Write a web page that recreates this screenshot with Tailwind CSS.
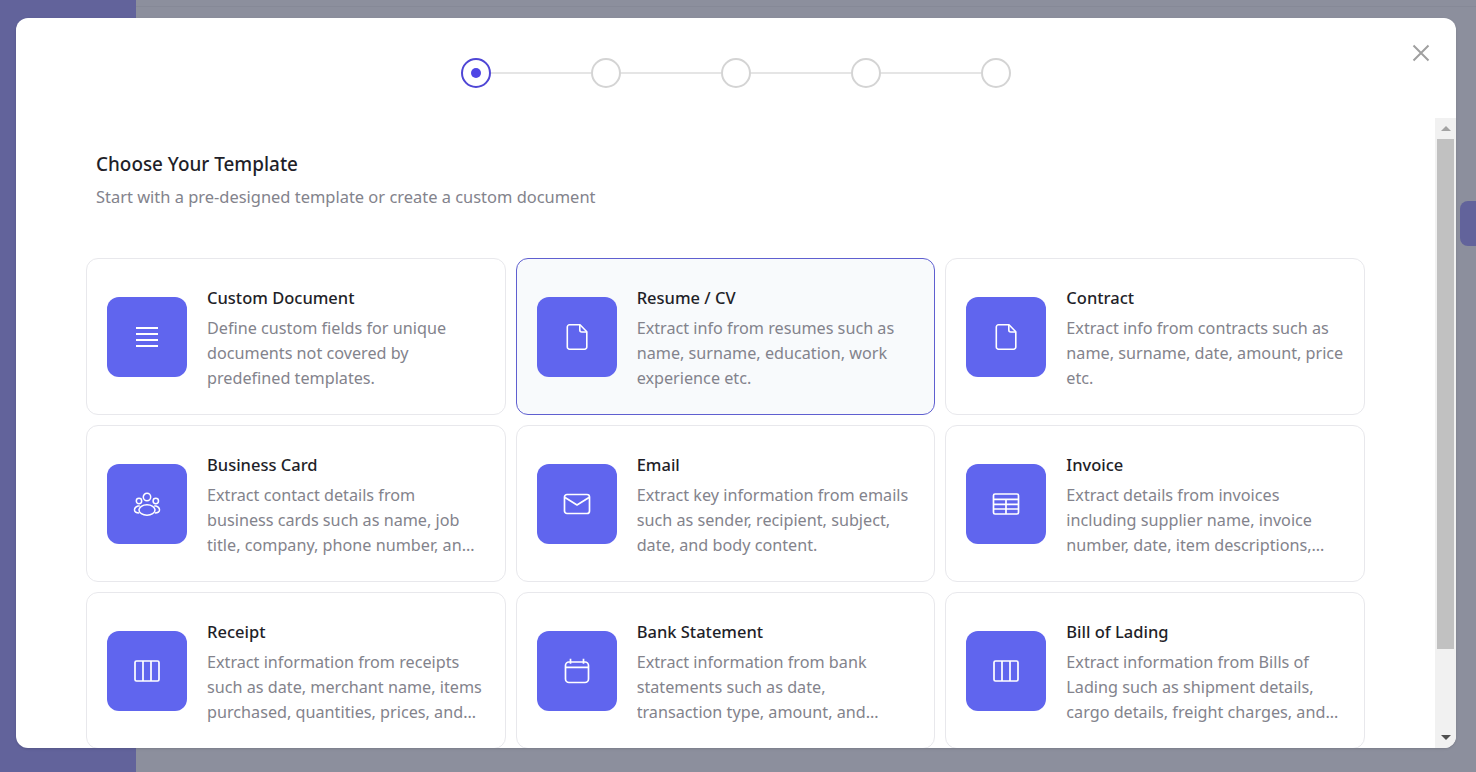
<!DOCTYPE html>
<html lang="en">
  <head>
    <meta charset="UTF-8" />
    <meta name="viewport" content="width=device-width, initial-scale=1.0" />
    <title>Choose Your Template</title>
    <script src="https://cdn.jsdelivr.net/npm/@tailwindcss/browser@4"></script>
  </head>
  <body class="h-[772px] overflow-hidden bg-[#8c8f9d] font-['Noto_Sans',sans-serif]">
    <!-- Page behind the dialog -->
    <div class="flex h-[772px]">
      <div class="w-[136px] bg-[#62639b]"></div>
      <div class="flex-1 flex flex-col">
        <div class="mt-[6px] h-px bg-[#868997]"></div>
        <div class="flex-1 flex justify-end items-start pt-[194px]">
          <div class="w-[16px] h-[45px] rounded-l-lg bg-[#62639b]"></div>
        </div>
      </div>
    </div>

    <!-- Dialog -->
    <div class="absolute left-[16px] top-[18px] w-[1440px] h-[730px] bg-white rounded-xl overflow-hidden flex flex-col shadow-sm">
      <!-- Stepper -->
      <div class="h-[100px] shrink-0 pt-[40px] flex justify-center relative">
        <div class="flex items-center h-[30px]">
          <div class="w-[30px] h-[30px] rounded-full border-2 border-[#4f46d5] flex items-center justify-center">
            <div class="w-[10px] h-[10px] rounded-full bg-[#4f46e5]"></div>
          </div>
          <div class="w-[100px] h-[2px] bg-[#e5e5e5]"></div>
          <div class="w-[30px] h-[30px] rounded-full border-2 border-[#d4d4d4]"></div>
          <div class="w-[100px] h-[2px] bg-[#e5e5e5]"></div>
          <div class="w-[30px] h-[30px] rounded-full border-2 border-[#d4d4d4]"></div>
          <div class="w-[100px] h-[2px] bg-[#e5e5e5]"></div>
          <div class="w-[30px] h-[30px] rounded-full border-2 border-[#d4d4d4]"></div>
          <div class="w-[100px] h-[2px] bg-[#e5e5e5]"></div>
          <div class="w-[30px] h-[30px] rounded-full border-2 border-[#d4d4d4]"></div>
        </div>
        <svg class="absolute left-[1395px] top-[25px]" width="20" height="20" viewBox="0 0 20 20" fill="none" stroke="#a0a0a0" stroke-width="2"><path d="M2.500 2.500l15 15M17.500 2.500l-15 15" /></svg>
      </div>

      <div class="flex-1 flex min-h-0">
        <!-- Scrolling content -->
        <div class="flex-1 overflow-hidden pl-[70px] pr-[70px] pt-[33px]">
          <div class="pl-[10px]">
            <h2 class="text-[18.900px] leading-[27px] font-medium text-[#1f1f29]">Choose Your Template</h2>
            <p class="mt-[6px] text-[16.460px] leading-[25px] text-[#83838c]">Start with a pre-designed template or create a custom document</p>
          </div>

          <div class="mt-[49px] grid grid-cols-3 gap-x-[10px] gap-y-[10px]">
            <div class="h-[157px] rounded-xl border border-[#e8e8ec] bg-white flex items-center gap-[20px] px-[20px]">
              <div class="w-[80px] h-[80px] shrink-0 rounded-xl bg-[#6065ee] flex items-center justify-center">
                <svg width="32" height="32" viewBox="0 0 32 32" fill="none" stroke="white" stroke-width="1.800"><path d="M5 7h22M5 13h22M5 19h22M5 25h22" /></svg>
              </div>
              <div class="min-w-0 pt-[3px]">
                <h3 class="text-[16.500px] leading-[25px] font-medium text-[#1f1f29]">Custom Document</h3>
                <p class="mt-[6px] text-[16.200px] leading-[25px] text-[#83838c] line-clamp-3">Define custom fields for unique documents not covered by predefined templates.</p>
              </div>
            </div>

            <div class="h-[157px] rounded-xl border border-[#5f5fd0] bg-[#f8fafc] flex items-center gap-[20px] px-[20px]">
              <div class="w-[80px] h-[80px] shrink-0 rounded-xl bg-[#6065ee] flex items-center justify-center">
                <svg width="32" height="32" viewBox="0 0 32 32" fill="none" stroke="white" stroke-width="1.600" stroke-linejoin="round"><path d="M8.500 3.800h10.500l6.800 7v15.200a2.200 2.200 0 0 1-2.200 2.200h-15.100a2.200 2.200 0 0 1-2.200-2.200v-20a2.200 2.200 0 0 1 2.200-2.200z" /><path d="M18.800 4v5a2 2 0 0 0 2 2h5" /></svg>
              </div>
              <div class="min-w-0 pt-[3px]">
                <h3 class="text-[16.500px] leading-[25px] font-medium text-[#1f1f29]">Resume / CV</h3>
                <p class="mt-[6px] text-[16.200px] leading-[25px] text-[#83838c] line-clamp-3">Extract info from resumes such as name, surname, education, work experience etc.</p>
              </div>
            </div>

            <div class="h-[157px] rounded-xl border border-[#e8e8ec] bg-white flex items-center gap-[20px] px-[20px]">
              <div class="w-[80px] h-[80px] shrink-0 rounded-xl bg-[#6065ee] flex items-center justify-center">
                <svg width="32" height="32" viewBox="0 0 32 32" fill="none" stroke="white" stroke-width="1.600" stroke-linejoin="round"><path d="M8.500 3.800h10.500l6.800 7v15.200a2.200 2.200 0 0 1-2.200 2.200h-15.100a2.200 2.200 0 0 1-2.200-2.200v-20a2.200 2.200 0 0 1 2.200-2.200z" /><path d="M18.800 4v5a2 2 0 0 0 2 2h5" /></svg>
              </div>
              <div class="min-w-0 pt-[3px]">
                <h3 class="text-[16.500px] leading-[25px] font-medium text-[#1f1f29]">Contract</h3>
                <p class="mt-[6px] text-[16.200px] leading-[25px] text-[#83838c] line-clamp-3">Extract info from contracts such as name, surname, date, amount, price etc.</p>
              </div>
            </div>

            <div class="h-[157px] rounded-xl border border-[#e8e8ec] bg-white flex items-center gap-[20px] px-[20px]">
              <div class="w-[80px] h-[80px] shrink-0 rounded-xl bg-[#6065ee] flex items-center justify-center">
                <svg width="32" height="32" viewBox="0 0 32 32" fill="none" stroke="white" stroke-width="1.500"><circle cx="16" cy="9" r="3.700" /><circle cx="8" cy="13" r="2.700" /><circle cx="24.800" cy="13" r="2.700" /><ellipse cx="16" cy="22" rx="8" ry="5.200" /><path d="M8.800 18h-1.800c-2 .6-3.500 2.200-3.500 4 0 1.500 1.400 2.800 4.800 3M23.200 18h1.800c2 .6 3.500 2.200 3.500 4 0 1.500-1.400 2.800-4.800 3" /></svg>
              </div>
              <div class="min-w-0 pt-[3px]">
                <h3 class="text-[16.500px] leading-[25px] font-medium text-[#1f1f29]">Business Card</h3>
                <p class="mt-[6px] pr-[3px] text-[16.200px] leading-[25px] text-[#83838c] line-clamp-3">Extract contact details from business cards such as name, job title, company, phone number, and address details from every card.</p>
              </div>
            </div>

            <div class="h-[157px] rounded-xl border border-[#e8e8ec] bg-white flex items-center gap-[20px] px-[20px]">
              <div class="w-[80px] h-[80px] shrink-0 rounded-xl bg-[#6065ee] flex items-center justify-center">
                <svg width="32" height="32" viewBox="0 0 32 32" fill="none" stroke="white" stroke-width="1.700" stroke-linejoin="round"><rect x="3.500" y="6.500" width="25" height="19" rx="2.500" /><path d="M4 9.500l12 7.500 12-7.500" /></svg>
              </div>
              <div class="min-w-0 pt-[3px]">
                <h3 class="text-[16.500px] leading-[25px] font-medium text-[#1f1f29]">Email</h3>
                <p class="mt-[6px] text-[16.200px] leading-[25px] text-[#83838c] line-clamp-3">Extract key information from emails such as sender, recipient, subject, date, and body content.</p>
              </div>
            </div>

            <div class="h-[157px] rounded-xl border border-[#e8e8ec] bg-white flex items-center gap-[20px] px-[20px]">
              <div class="w-[80px] h-[80px] shrink-0 rounded-xl bg-[#6065ee] flex items-center justify-center">
                <svg width="32" height="32" viewBox="0 0 32 32" fill="none" stroke="white" stroke-width="1.700"><rect x="3.500" y="6" width="25" height="20" rx="1.500" /><path d="M3.500 11.300h25M3.500 16.300h25M3.500 21h25M16 11.300v14.700" /></svg>
              </div>
              <div class="min-w-0 pt-[3px]">
                <h3 class="text-[16.500px] leading-[25px] font-medium text-[#1f1f29]">Invoice</h3>
                <p class="mt-[6px] text-[16.200px] leading-[25px] text-[#83838c] line-clamp-3">Extract details from invoices including supplier name, invoice number, date, item descriptions, quantities, prices and totals.</p>
              </div>
            </div>

            <div class="h-[157px] rounded-xl border border-[#e8e8ec] bg-white flex items-center gap-[20px] px-[20px]">
              <div class="w-[80px] h-[80px] shrink-0 rounded-xl bg-[#6065ee] flex items-center justify-center">
                <svg width="32" height="32" viewBox="0 0 32 32" fill="none" stroke="white" stroke-width="1.700"><rect x="4" y="6" width="24" height="20" rx="1.500" /><path d="M12 6v20M20 6v20" /></svg>
              </div>
              <div class="min-w-0 pt-[3px]">
                <h3 class="text-[16.500px] leading-[25px] font-medium text-[#1f1f29]">Receipt</h3>
                <p class="mt-[6px] text-[16.200px] leading-[25px] text-[#83838c] line-clamp-3">Extract information from receipts such as date, merchant name, items purchased, quantities, prices, and totals for every single purchase.</p>
              </div>
            </div>

            <div class="h-[157px] rounded-xl border border-[#e8e8ec] bg-white flex items-center gap-[20px] px-[20px]">
              <div class="w-[80px] h-[80px] shrink-0 rounded-xl bg-[#6065ee] flex items-center justify-center">
                <svg width="32" height="32" viewBox="0 0 32 32" fill="none" stroke="white" stroke-width="1.700"><rect x="4.500" y="7" width="23" height="20.500" rx="3.500" /><path d="M4.500 12.300h23M9.500 3.800v5M22.500 3.800v5" /></svg>
              </div>
              <div class="min-w-0 pt-[3px]">
                <h3 class="text-[16.500px] leading-[25px] font-medium text-[#1f1f29]">Bank Statement</h3>
                <p class="mt-[6px] text-[16.200px] leading-[25px] text-[#83838c] line-clamp-3">Extract information from bank statements such as date, transaction type, amount, and balance for each of the listed transactions.</p>
              </div>
            </div>

            <div class="h-[157px] rounded-xl border border-[#e8e8ec] bg-white flex items-center gap-[20px] px-[20px]">
              <div class="w-[80px] h-[80px] shrink-0 rounded-xl bg-[#6065ee] flex items-center justify-center">
                <svg width="32" height="32" viewBox="0 0 32 32" fill="none" stroke="white" stroke-width="1.700"><rect x="4" y="6" width="24" height="20" rx="1.500" /><path d="M12 6v20M20 6v20" /></svg>
              </div>
              <div class="min-w-0 pt-[3px]">
                <h3 class="text-[16.500px] leading-[25px] font-medium text-[#1f1f29]">Bill of Lading</h3>
                <p class="mt-[6px] text-[16.200px] leading-[25px] text-[#83838c] line-clamp-3">Extract information from Bills of Lading such as shipment details, cargo details, freight charges, and delivery terms for each shipment.</p>
              </div>
            </div>
          </div>
        </div>

        <!-- Scrollbar -->
        <div class="w-[21px] shrink-0 bg-[#f1f1f1] flex flex-col items-center">
          <div class="h-[21px] flex items-center justify-center">
            <div class="w-0 h-0 border-x-[5px] border-x-transparent border-b-[5px] border-b-[#a3a3a3]"></div>
          </div>
          <div class="w-[17px] h-[510px] bg-[#c1c1c1]"></div>
          <div class="flex-1"></div>
          <div class="h-[21px] flex items-center justify-center">
            <div class="w-0 h-0 border-x-[5px] border-x-transparent border-t-[5px] border-t-[#505050]"></div>
          </div>
        </div>
      </div>
    </div>
  </body>
</html>
